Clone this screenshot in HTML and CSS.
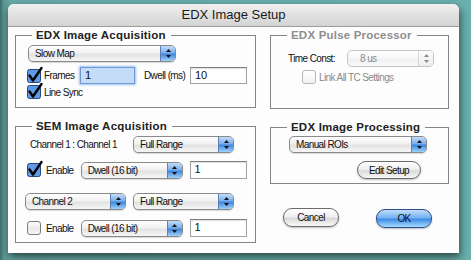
FILE: index.html
```html
<!DOCTYPE html>
<html lang="en">
<head>
  <meta charset="UTF-8">
  <title>EDX Image Setup</title>
  <link rel="stylesheet" href="styles.css">
</head>
<body>
  <div class="window">
    <div class="titlebar">EDX Image Setup</div>

    <div class="window-body">
      <div class="col">
        <fieldset class="group acq">
          <legend>EDX Image Acquisition</legend>
          <div class="popup w148"><span class="label">Slow Map</span><span class="cap"><svg width="7" height="11" viewBox="0 0 7 11"><polygon points="3.5,1 6,4 1,4"/><polygon points="1,7 6,7 3.5,10"/></svg></span></div>
          <div class="row frames-row">
            <span class="check on"><svg width="16" height="16" viewBox="0 0 16 16"><rect x="0.5" y="2.5" width="13" height="13" rx="2"/><path d="M2.5 8.5 L6 13.5 L14.5 1"/></svg></span>
            <span class="text w36">Frames</span>
            <span class="field focus w55">1</span>
            <span class="text dwell">Dwell (ms)</span>
            <span class="field w57">10</span>
          </div>
          <div class="row sync-row">
            <span class="check on"><svg width="16" height="16" viewBox="0 0 16 16"><rect x="0.5" y="2.5" width="13" height="13" rx="2"/><path d="M2.5 8.5 L6 13.5 L14.5 1"/></svg></span>
            <span class="text">Line Sync</span>
          </div>
        </fieldset>

        <fieldset class="group sem">
          <legend>SEM Image Acquisition</legend>
          <div class="row">
            <span class="text channel">Channel 1 : Channel 1</span>
            <div class="popup w101"><span class="label">Full Range</span><span class="cap"><svg width="7" height="11" viewBox="0 0 7 11"><polygon points="3.5,1 6,4 1,4"/><polygon points="1,7 6,7 3.5,10"/></svg></span></div>
          </div>
          <div class="row enable-row">
            <span class="check on"><svg width="16" height="16" viewBox="0 0 16 16"><rect x="0.5" y="2.5" width="13" height="13" rx="2"/><path d="M2.5 8.5 L6 13.5 L14.5 1"/></svg></span>
            <span class="text w35">Enable</span>
            <div class="popup w103"><span class="label">Dwell (16 bit)</span><span class="cap"><svg width="7" height="11" viewBox="0 0 7 11"><polygon points="3.5,1 6,4 1,4"/><polygon points="1,7 6,7 3.5,10"/></svg></span></div>
            <span class="field w58 sem-field">1</span>
          </div>
          <div class="row channel2-row">
            <div class="popup w101"><span class="label">Channel 2</span><span class="cap"><svg width="7" height="11" viewBox="0 0 7 11"><polygon points="3.5,1 6,4 1,4"/><polygon points="1,7 6,7 3.5,10"/></svg></span></div>
            <div class="popup w101"><span class="label">Full Range</span><span class="cap"><svg width="7" height="11" viewBox="0 0 7 11"><polygon points="3.5,1 6,4 1,4"/><polygon points="1,7 6,7 3.5,10"/></svg></span></div>
          </div>
          <div class="row enable-row2">
            <span class="check"></span>
            <span class="text w35">Enable</span>
            <div class="popup w103"><span class="label">Dwell (16 bit)</span><span class="cap"><svg width="7" height="11" viewBox="0 0 7 11"><polygon points="3.5,1 6,4 1,4"/><polygon points="1,7 6,7 3.5,10"/></svg></span></div>
            <span class="field w58 sem-field">1</span>
          </div>
        </fieldset>
      </div>

      <div class="col">
        <fieldset class="group pulse disabled">
          <legend>EDX Pulse Processor</legend>
          <div class="row time-row">
            <span class="text w59">Time Const:</span>
            <div class="popup disabled w87"><span class="label">8 us</span><span class="cap"><svg width="7" height="11" viewBox="0 0 7 11"><polygon points="3.5,1 6,4 1,4"/><polygon points="1,7 6,7 3.5,10"/></svg></span></div>
          </div>
          <div class="row link-row">
            <span class="check off-dim"></span>
            <span class="text dim">Link All TC Settings</span>
          </div>
        </fieldset>

        <fieldset class="group proc">
          <legend>EDX Image Processing</legend>
          <div class="popup w138 rois"><span class="label">Manual ROIs</span><span class="cap"><svg width="7" height="11" viewBox="0 0 7 11"><polygon points="3.5,1 6,4 1,4"/><polygon points="1,7 6,7 3.5,10"/></svg></span></div>
          <button class="btn edit">Edit Setup</button>
        </fieldset>

        <div class="actions">
          <button class="btn cancel">Cancel</button>
          <button class="btn default ok">OK</button>
        </div>
      </div>
    </div>
  </div>
</body>
</html>
```

FILE: styles.css
```css
html, body {
  margin: 0;
  height: 100%;
}
body {
  background: linear-gradient(to right, #3d6b6a 0, #5b9795 4px, #66aba8 12px, #6ab0ad 100%);
  font-family: "Liberation Sans", Arial, sans-serif;
  font-size: 10px;
  letter-spacing: -0.6px;
  color: #111;
  overflow: hidden;
}
* {
  box-sizing: border-box;
}

.window {
  margin: 4px 0 0 8px;
  width: 451px;
  height: 249px;
  background: #fdfdfd;
  border-radius: 6px 6px 0 0;
  box-shadow: 1px 4px 8px rgba(0, 0, 0, 0.6);
  overflow: hidden;
}
.titlebar {
  height: 23px;
  line-height: 22px;
  text-align: center;
  font-size: 13px;
  letter-spacing: 0;
  color: #1a1a1a;
  background: linear-gradient(#f0f0f0, #dedede 60%, #d4d4d4);
  border-bottom: 1px solid #9d9d9d;
}
.window-body {
  display: grid;
  grid-template-columns: 241px 179px;
  column-gap: 14px;
  padding: 1px 10px 0 7px;
}
.col {
  display: flex;
  flex-direction: column;
  gap: 11px;
}

/* group boxes */
.group {
  margin: 0;
  padding: 3px 8px 0 12px;
  border: 1px solid #858585;
  min-width: 0;
}
.group legend {
  margin-left: 4px;
  padding: 0 5px 0 4px;
  font-weight: bold;
  font-size: 11.5px;
  line-height: 14px;
  color: #222;
  letter-spacing: 0.2px;
}
.group.disabled legend {
  color: #8e8e8e;
}
.acq { height: 80px; }
.sem { height: 124px; }
.pulse { height: 81px; padding-top: 8px; }
.proc { height: 64px; padding-top: 2px; }

.row {
  display: flex;
  align-items: center;
}
.text {
  white-space: nowrap;
}
.dim { color: #8a8a8a; }
.w35 { width: 35px; }
.w36 { width: 36px; }
.w59 { width: 59px; }

/* popups */
.popup {
  display: flex;
  height: 17px;
  border: 1px solid #8a8a8a;
  border-radius: 5px;
  background: linear-gradient(#ffffff, #f1f1f1 45%, #e2e2e2 55%, #f6f6f6);
  box-shadow: 0 1px 1px rgba(0, 0, 0, 0.15);
  overflow: hidden;
}
.popup .label {
  flex: 1;
  padding-left: 6px;
  line-height: 15px;
  white-space: nowrap;
}
.popup .cap {
  width: 15px;
  display: flex;
  align-items: center;
  justify-content: center;
  border-left: 1px solid #5d7fb5;
  background: linear-gradient(#c3dcf8, #79afec 45%, #3f87dd 55%, #9fd2fb);
}
.popup .cap polygon { fill: #111; }
.popup.disabled {
  border-color: #c4c4c4;
  box-shadow: none;
  background: linear-gradient(#ffffff, #f6f6f6 50%, #efefef 55%, #fafafa);
}
.popup.disabled .label { color: #8a8a8a; padding-left: 12px; }
.popup.disabled .cap {
  border-left: 1px solid #d6d6d6;
  background: linear-gradient(#fbfbfb, #eeeeee);
}
.popup.disabled .cap polygon { fill: #8d8d8d; }
.w87 { width: 87px; }
.w101 { width: 101px; }
.w103 { width: 103px; }
.w138 { width: 138px; }
.w148 { width: 148px; }

/* text fields */
.field {
  height: 17px;
  border: 1px solid #a2a2a2;
  border-top-color: #7d7d7d;
  background: #fff;
  box-shadow: inset 0 1px 1px rgba(0, 0, 0, 0.12);
  font-size: 11px;
  letter-spacing: 0;
  line-height: 15px;
  padding-left: 4px;
}
.field.focus {
  background: #c4dcf8;
  border-color: #6f98d0;
  box-shadow: 0 0 2px 1px #9cc1ee;
}
.w55 { width: 55px; }
.w57 { width: 57px; }
.w58 { width: 58px; }

/* checkboxes */
.check {
  position: relative;
  width: 14px;
  height: 14px;
  margin: 0 5px 0 -1px;
  flex: none;
  border: 1px solid #7c7c7c;
  border-radius: 3px;
  background: linear-gradient(#ffffff, #e9e9e9 55%, #f7f7f7);
}
.check.on {
  border: none;
  background: none;
}
.check svg {
  position: absolute;
  left: 0;
  top: -2px;
  overflow: visible;
}
.check svg rect {
  fill: #5e9be4;
  stroke: #27467f;
}
.check svg path {
  fill: none;
  stroke: #000;
  stroke-width: 2.4;
  stroke-linecap: round;
  stroke-linejoin: round;
}
.check.off-dim {
  border-color: #b8b8b8;
  background: linear-gradient(#ffffff, #f1f1f1);
}

.frames-row { margin-top: 5px; height: 17px; }
.frames-row .check { margin-right: 3px; }
.dwell { margin-left: 9px; width: 46px; }
.sync-row { margin-top: 1px; }
.sync-row .check { margin-right: 3px; }

.channel { width: 105px; padding-left: 2px; }
.enable-row { margin-top: 8px; }
.enable-row .check, .enable-row2 .check { margin-right: 5px; }
.sem-field { margin-left: 7px; height: 18px; }
.channel2-row { margin-top: 14px; margin-left: -3px; gap: 7px; }
.enable-row2 { margin-top: 9px; }

.time-row { margin-left: 5px; }
.link-row { margin: 3px 0 0 20px; }
.link-row .check { margin-right: 3px; }

.rois { margin-left: 6px; }

/* buttons */
.btn {
  height: 18px;
  padding: 0;
  border: 1px solid #6c6c6c;
  border-radius: 9px;
  background: linear-gradient(#ffffff, #efefef 45%, #dadada 55%, #f8f8f8);
  box-shadow: 0 1px 2px rgba(0, 0, 0, 0.25);
  font-family: inherit;
  font-size: 10px;
  letter-spacing: -0.6px;
  color: #111;
}
.btn.default {
  border-color: #2c4d8c;
  background: linear-gradient(#c2defa, #74b2f1 45%, #3f8de6 55%, #a6dcff);
}
.edit {
  display: block;
  width: 64px;
  margin: 8px 0 0 74px;
}
.actions {
  display: flex;
  gap: 37px;
  margin: 13px 0 0 13px;
}
.cancel, .ok {
  width: 56px;
  height: 19px;
}
.ok { margin-top: 1px; }
```
